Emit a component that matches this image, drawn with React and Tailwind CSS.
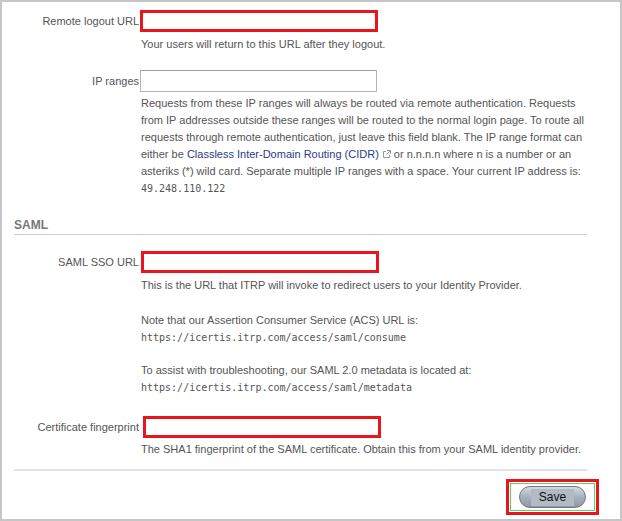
import React from 'react';

const ExternalIcon = () => (
    <svg width="9" height="9" viewBox="0 0 9 9" className="inline-block align-[-1px] mx-[3px]" fill="none" stroke="#9a9a9a" strokeWidth="1">
        <path d="M4 1.5H1.5v6h6V5" />
        <path d="M5 0.5h3.5V4M8.5 0.5L4.5 4.5" />
    </svg>
);

const Row = ({ label, children, className = '' }) => (
    <div className={`grid grid-cols-[138px_1fr] items-center ${className}`}>
        <div className="text-right pr-[1px] text-[11px] text-[#555] whitespace-nowrap">{label}</div>
        <div>{children}</div>
    </div>
);

const RedBox = ({ className = '' }) => (
    <div className={`h-[22px] w-[238px] border-[3px] border-[#e8141e] bg-white ${className}`} />
);

const Help = ({ children, className = '' }) => (
    <div className={`ml-[139px] text-[11px] leading-[17px] text-[#555] whitespace-nowrap ${className}`}>{children}</div>
);

const Mono = ({ children }) => (
    <span className="font-['DejaVu_Sans_Mono',monospace] text-[10px] text-[#555]">{children}</span>
);

export default function App() {
    return (
        <div className="w-[622px] h-[521px] border-2 border-[#c6c6c6] bg-white font-['Liberation_Sans',Arial,sans-serif] overflow-hidden">
            <Row label="Remote logout URL" className="mt-[8px]">
                <RedBox />
            </Row>
            <Help className="mt-[4px]">Your users will return to this URL after they logout.</Help>

            <Row label="IP ranges" className="mt-[17px]">
                <div className="h-[22px] w-[237px] border border-[#b4b4b4] border-t-[#9c9c9c] bg-white" />
            </Row>
            <Help className="mt-[3px] leading-[17.2px]">
                Requests from these IP ranges will always be routed via remote authentication. Requests<br />
                from IP addresses outside these ranges will be routed to the normal login page. To route all<br />
                requests through remote authentication, just leave this field blank. The IP range format can<br />
                either be <span className="text-[#2b3a8c]">Classless Inter-Domain Routing (CIDR)</span><ExternalIcon />or n.n.n.n where n is a number or an<br />
                asteriks (*) wild card. Separate multiple IP ranges with a space. Your current IP address is:<br />
                <Mono>49.248.110.122</Mono>
            </Help>

            <div className="ml-[12px] mr-[33px] mt-[21px] border-b border-[#cfcfcf] pb-[2px] text-[12px] leading-[14px] font-bold text-[#777]">
                SAML
            </div>

            <Row label="SAML SSO URL" className="mt-[16px]">
                <RedBox className="ml-[1px] w-[237px]" />
            </Row>
            <Help className="mt-[4px]">This is the URL that ITRP will invoke to redirect users to your Identity Provider.</Help>
            <Help className="mt-[18px]">
                Note that our Assertion Consumer Service (ACS) URL is:<br />
                <Mono>https://icertis.itrp.com/access/saml/consume</Mono>
            </Help>
            <Help className="mt-[16px]">
                To assist with troubleshooting, our SAML 2.0 metadata is located at:<br />
                <Mono>https://icertis.itrp.com/access/saml/metadata</Mono>
            </Help>

            <Row label="Certificate fingerprint" className="mt-[20px]">
                <RedBox className="ml-[3px] w-[235px]" />
            </Row>
            <Help className="mt-[3px]">The SHA1 fingerprint of the SAML certificate. Obtain this from your SAML identity provider.</Help>

            <div className="ml-[12px] mr-[33px] mt-[11px] border-t-2 border-[#e4e4e4]" />

            <div className="flex justify-end mr-[21px] mt-[8px]">
                <div className="w-[93px] h-[36px] border-[3px] border-[#e8141e] p-[1px]">
                    <div className="h-full w-full border border-[#5fd06a] flex items-start">
                        <button className="ml-[8px] mt-[2px] w-[67px] h-[22px] rounded-full border border-[#6e7986] bg-gradient-to-b from-[#d5dbe2] via-[#a8b0bb] to-[#8e98a5] flex items-center justify-center">
                            <span className="px-[8px] h-[17px] bg-[#b2bac4] text-[12px] leading-[17px] text-[#111]">Save</span>
                        </button>
                    </div>
                </div>
            </div>
        </div>
    );
}
